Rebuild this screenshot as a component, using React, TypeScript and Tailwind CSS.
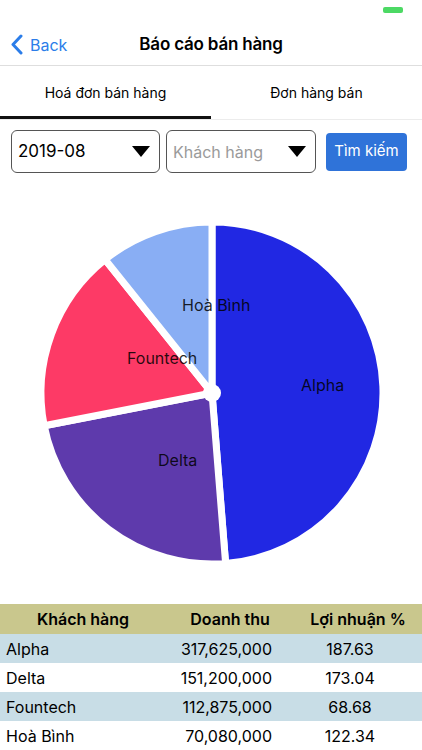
import React from 'react';

const slices = [
  { name: 'Alpha', value: 317625000, profit: '187.63', color: '#2128e3', lx: 301, ly: 217.5 },
  { name: 'Delta', value: 151200000, profit: '173.04', color: '#5e3aac', lx: 158, ly: 293 },
  { name: 'Fountech', value: 112875000, profit: '68.68', color: '#fd3a66', lx: 127, ly: 190.5 },
  { name: 'Hoà Bình', value: 70080000, profit: '122.34', color: '#89aef4', lx: 182, ly: 137.5 },
];

const CX = 212;
const CY = 220;
const R = 171;

function point(angle: number, r: number) {
  const a = (angle * Math.PI) / 180;
  return [CX + r * Math.sin(a), CY - r * Math.cos(a)];
}

function PieChart() {
  const total = slices.reduce((s, x) => s + x.value, 0);
  let start = 0;
  return (
    <svg width="422" height="431" className="block">
      {slices.map((s) => {
        const sweep = (s.value / total) * 360;
        const [x1, y1] = point(start, R);
        const [x2, y2] = point(start + sweep, R);
        const large = sweep > 180 ? 1 : 0;
        const d = `M ${CX} ${CY} L ${x1} ${y1} A ${R} ${R} 0 ${large} 1 ${x2} ${y2} Z`;
        start += sweep;
        return <path key={s.name} d={d} fill={s.color} stroke="#fff" strokeWidth="7" strokeLinejoin="round" />;
      })}
      <circle cx={CX} cy={CY} r="9" fill="#fff" />
      {slices.map((s) => (
        <text key={s.name} x={s.lx} y={s.ly} fontSize="16" fill="#000" fillOpacity="0.85">
          {s.name}
        </text>
      ))}
    </svg>
  );
}

function Caret() {
  return (
    <svg width="18" height="11" viewBox="0 0 18 11">
      <path d="M0 0 H18 L9 11 Z" fill="#000" />
    </svg>
  );
}

export default function App() {
  return (
    <div className="w-[422px] h-[750px] bg-white overflow-hidden text-black" style={{ fontFamily: 'Inter, "Liberation Sans", sans-serif' }}>
      {/* status bar */}
      <div className="h-[24px] flex justify-end pt-[7px] pr-[19px]">
        <div className="w-[20px] h-[6px] rounded-[2px] bg-[#4cd964]" />
      </div>

      {/* nav bar */}
      <div className="h-[42px] grid grid-cols-[1fr_auto_1fr] items-center border-b border-[#dedede]">
        <div className="flex items-center pl-[10px] text-[#2b7de9]">
          <svg width="13" height="21" viewBox="0 0 13 21">
            <path d="M11 2 L3 10.5 L11 19" fill="none" stroke="currentColor" strokeWidth="3" strokeLinecap="round" strokeLinejoin="round" />
          </svg>
          <span className="ml-[7px] text-[16px]">Back</span>
        </div>
        <div className="text-[17px] font-semibold tracking-[-0.2px]">Báo cáo bán hàng</div>
        <div />
      </div>

      {/* tabs */}
      <div className="h-[54px] flex border-b border-[#ececec]">
        <div className="flex-1 flex items-center justify-center border-b-[3px] border-[#111] text-[14px] pt-[2px]">
          Hoá đơn bán hàng
        </div>
        <div className="flex-1 flex items-center justify-center text-[14px] pb-[1px]">Đơn hàng bán</div>
      </div>

      {/* filters */}
      <div className="mt-[10px] px-[11px] flex items-center">
        <div className="w-[149px] h-[43px] border border-[#555] rounded-[6px] flex items-center justify-between pl-[6px] pr-[9px]">
          <span className="text-[17px]">2019-08</span>
          <Caret />
        </div>
        <div className="ml-[6px] w-[150px] h-[43px] border border-[#555] rounded-[6px] flex items-center justify-between pl-[6px] pr-[9px]">
          <span className="text-[16px] text-[#9a9a9a]">Khách hàng</span>
          <Caret />
        </div>
        <button className="ml-[10px] w-[81px] h-[38px] rounded-[4px] bg-[#2f73d9] text-white text-[15px]">Tìm kiếm</button>
      </div>

      {/* chart */}
      <PieChart />

      {/* table */}
      <div className="text-[16px]">
        <div className="h-[30px] grid grid-cols-[166px_128px_128px] items-center bg-[#c9c78d] font-semibold">
          <div className="text-center">Khách hàng</div>
          <div className="text-center">Doanh thu</div>
          <div className="text-center">Lợi nhuận %</div>
        </div>
        {slices.map((s, i) => (
          <div
            key={s.name}
            className={`h-[29px] grid grid-cols-[166px_128px_128px] items-center ${i % 2 === 0 ? 'bg-[#c8dde6]' : 'bg-white'}`}
          >
            <div className="pl-[6px]">{s.name}</div>
            <div className="text-right pr-[22px]">{s.value.toLocaleString('en-US')}</div>
            <div className="text-center pr-[16px]">{s.profit}</div>
          </div>
        ))}
      </div>
    </div>
  );
}
